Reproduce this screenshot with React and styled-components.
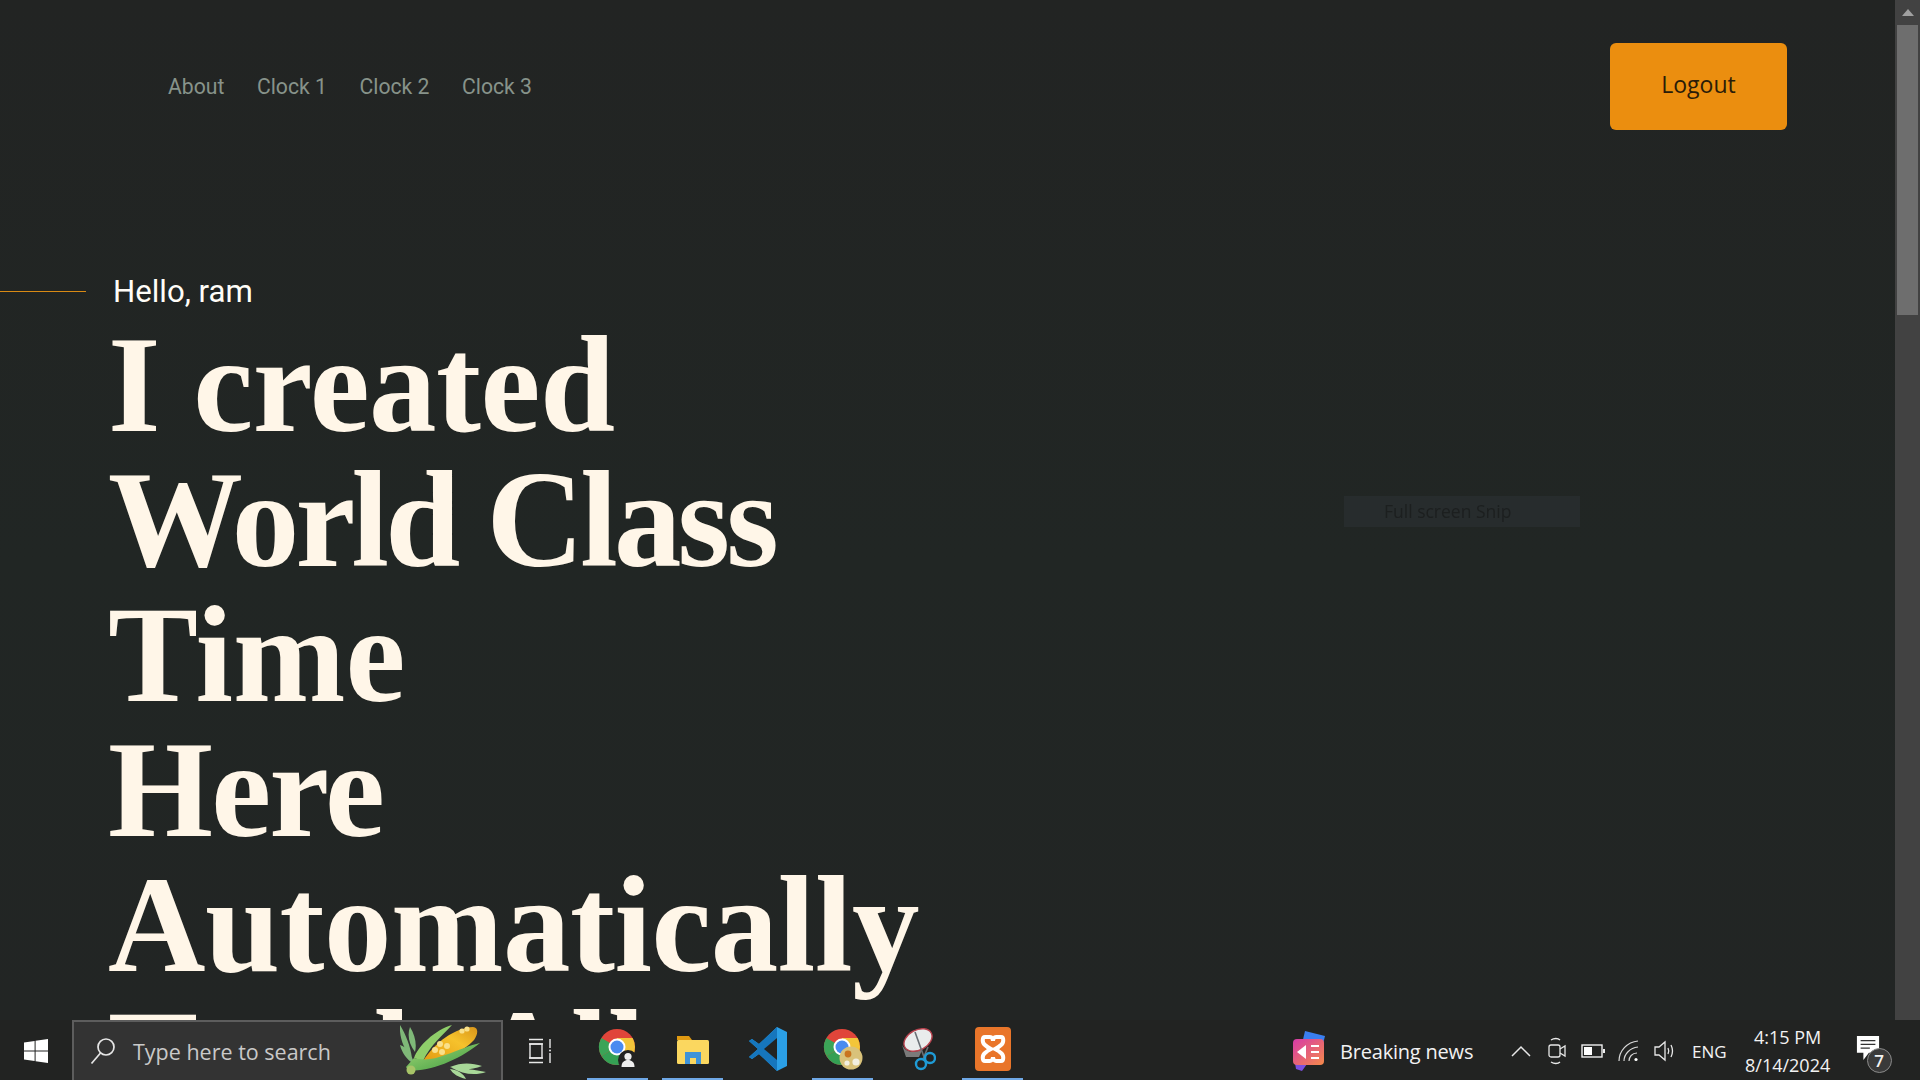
import React from 'react';
import styled, { createGlobalStyle } from 'styled-components';

const GlobalStyle = createGlobalStyle`
  html, body {
    margin: 0;
    height: 100%;
    overflow: hidden;
    background: #222423;
  }
  * { box-sizing: border-box; }
`;

const Screen = styled.div`
  width: 1920px;
  height: 1080px;
  display: flex;
  flex-direction: column;
  overflow: hidden;
`;
const Viewport = styled.div`
  flex: 0 0 1020px;
  display: flex;
  overflow: hidden;
`;
const Page = styled.main`
  position: relative;
  flex: 1;
  overflow: hidden;
  background: linear-gradient(180deg, #222423 0%, #212624 55%, #222524 100%);
`;
const Header = styled.header`
  height: 173px;
  padding: 43px 108px 0 168px;
  display: flex;
  align-items: flex-start;
  justify-content: space-between;
`;
const Nav = styled.nav`
  height: 87px;
  display: flex;
  align-items: center;
  gap: 32.5px;
`;
const NavLink = styled.a`
  font-family: Roboto, sans-serif;
  font-size: 21.2px;
  font-weight: 400;
  color: #87938a;
`;
const LogoutButton = styled.button`
  width: 177px;
  height: 87px;
  border: 0;
  border-radius: 6px;
  background: #eb8e0f;
  color: #2a1c08;
  font-family: "Open Sans", sans-serif;
  font-size: 23px;
  padding: 0 0 5px;
`;
const Hero = styled.section`
  padding-top: 100px;
`;
const Greeting = styled.div`
  display: flex;
  align-items: center;
  gap: 27px;
  height: 36px;
`;
const Rule = styled.span`
  width: 86px;
  height: 1px;
  background: #d98a14;
`;
const Hello = styled.span`
  font-family: Roboto, sans-serif;
  font-size: 31.2px;
  color: #fffdf8;
`;
const Title = styled.h1`
  margin: 9px 0 0 108px;
  font-family: "Liberation Serif", serif;
  font-size: 135px;
  font-weight: 700;
  line-height: 135px;
  color: #fff6e8;
`;
const TitleLine = styled.span`
  display: block;
  white-space: nowrap;
  letter-spacing: ${(p) => p.$spacing || '-0.5px'};
  transform: scaleY(${(p) => p.$stretch || 1.02});
  transform-origin: 0 76%;
`;
const SnipHint = styled.div`
  position: absolute;
  left: 1344px;
  top: 496px;
  width: 236px;
  height: 31px;
  background: #272c2d;
  color: #1c1f1f;
  font-family: "Open Sans", sans-serif;
  font-size: 17.5px;
  line-height: 31px;
  padding-left: 40px;
  filter: blur(0.6px);
`;
const Scrollbar = styled.div`
  flex: 0 0 25px;
  display: flex;
  flex-direction: column;
  align-items: center;
  background: #424242;
`;
const ScrollArrow = styled.div`
  height: 25px;
  display: flex;
  align-items: center;
  justify-content: center;
`;
const ScrollThumb = styled.div`
  width: 21px;
  height: 290px;
  background: #6e6e6e;
`;

const Taskbar = styled.footer`
  flex: 0 0 60px;
  display: flex;
  align-items: stretch;
  background: #222322;
  color: #f2f2f2;
`;
const StartButton = styled.div`
  width: 72px;
  display: flex;
  align-items: center;
  justify-content: center;
`;
const SearchBox = styled.div`
  width: 431px;
  padding: 0 14px 0 16px;
  display: flex;
  align-items: center;
  border: 2px solid #5d5d5d;
  background: #333333;
`;
const SearchText = styled.span`
  flex: 1;
  margin-left: 17px;
  font-family: "Open Sans", sans-serif;
  font-size: 21.5px;
  color: #c9c9c9;
`;
const TaskView = styled.div`
  width: 76px;
  display: flex;
  align-items: center;
  justify-content: center;
`;
const AppList = styled.div`
  display: flex;
  gap: 14px;
  margin-left: 8px;
`;
const AppCell = styled.div`
  width: 61px;
  display: flex;
  align-items: center;
  justify-content: center;
  border-bottom: 4px solid ${(p) => (p.$open ? '#6fa8e6' : 'transparent')};
`;
const Tray = styled.div`
  flex: 1;
  display: flex;
  align-items: center;
  padding-left: 268px;
`;
const News = styled.div`
  width: 212px;
  display: flex;
  align-items: center;
  gap: 15px;
  font-family: "Open Sans", sans-serif;
  font-size: 20px;
  letter-spacing: -0.2px;
`;
const TrayIcon = styled.div`
  width: 36px;
  display: flex;
  justify-content: center;
`;
const Lang = styled.span`
  margin-left: 9px;
  font-family: "Open Sans", sans-serif;
  font-size: 17px;
`;
const Clock = styled.div`
  width: 120px;
  margin-left: 1px;
  text-align: center;
  font-family: "Open Sans", sans-serif;
  font-size: 18px;
  line-height: 28px;
`;
const Notify = styled.div`
  position: relative;
  width: 38px;
  margin-left: 8px;
`;
const NotifyCount = styled.span`
  position: absolute;
  left: 11px;
  top: 13px;
  width: 25px;
  height: 25px;
  border: 1px solid #8a8a8a;
  border-radius: 50%;
  background: #3a3a3a;
  font-family: "Open Sans", sans-serif;
  font-size: 17px;
  font-weight: 600;
  line-height: 23px;
  text-align: center;
`;
const DesktopEdge = styled.div`
  width: 1px;
  margin: 0 7px 0 auto;
  background: #8f8f8f;
`;

const WindowsLogo = () => (
  <svg width="24" height="24" viewBox="0 0 24 24" fill="#fff">
    <path d="M0 3.4 10.6 2v9.4H0zM11.6 1.8 24 0v11.4H11.6zM0 12.5h10.6V22L0 20.6zM11.6 12.5H24V24l-12.4-1.8z" />
  </svg>
);

const SearchGlass = () => (
  <svg width="26" height="28" viewBox="0 0 26 28" fill="none" stroke="#e6e6e6" strokeWidth="1.7">
    <circle cx="16" cy="10" r="8" />
    <path d="M10.5 16 1.5 26.5" />
  </svg>
);

const Corn = () => (
  <svg width="87" height="58" viewBox="10 2 87 58">
    <defs>
      <linearGradient id="cob" x1="0" y1="1" x2="1" y2="0">
        <stop offset="0" stopColor="#e39a12" />
        <stop offset="0.6" stopColor="#f6c22c" />
        <stop offset="1" stopColor="#d9951a" />
      </linearGradient>
      <linearGradient id="husk" x1="0" y1="0" x2="1" y2="1">
        <stop offset="0" stopColor="#a5d878" />
        <stop offset="1" stopColor="#3a9a3e" />
      </linearGradient>
    </defs>
    <path d="M10 5C16 15 20 25 22 38 14 30 9 17 10 5zM20 7c5 8 7 17 5 25-6-8-8-17-5-25zM10 25c7 2 12 9 14 19-7-4-12-11-14-19z" fill="#7fb878" />
    <path d="M60 47c12-5 22-4 32-1-10 4-22 5-32 1zM62 48c10 0 23 2 34 4-11 4-24 2-34-4zM60 49c8 1 14 5 16 10-8-2-13-5-16-10z" fill="#a8d898" />
    <path d="M33 41C45 22 65 8 83 7c6 1 5 7 1 13C72 33 50 42 33 41z" fill="url(#cob)" />
    <circle cx="50" cy="24" r="3" fill="#f9e08a" />
    <circle cx="45" cy="30" r="3" fill="#f9e08a" />
    <circle cx="52" cy="32" r="3" fill="#f9e08a" />
    <circle cx="57" cy="26" r="3" fill="#f9e08a" />
    <circle cx="72" cy="11" r="2.6" fill="#f9e08a" />
    <circle cx="77" cy="9" r="2.6" fill="#f9e08a" />
    <path d="M24 38C28 26 45 10 62 5 54 14 40 25 33 41z" fill="#8fce6a" />
    <path d="M18 50c22 3 54-12 72-27-10 2-20 7-35 12-10 4-20 6-31 3l-8 9z" fill="url(#husk)" />
    <circle cx="21" cy="50" r="4.5" fill="#a7c468" />
  </svg>
);

const TaskViewIcon = () => (
  <svg width="26" height="26" viewBox="0 0 26 26" fill="none" stroke="#e8e8e8" strokeWidth="1.4">
    <path d="M1 1.5h14M1 6h14M1 20h14M1 24.5h14" />
    <rect x="2" y="6" width="12" height="14" />
    <path d="M22 1v9M22 15v10" />
    <circle cx="22" cy="12.5" r="1" fill="#e8e8e8" stroke="none" />
  </svg>
);

const Chrome = ({ children }) => (
  <svg width="40" height="44" viewBox="0 0 40 44">
    <circle cx="19" cy="20" r="18" fill="#e0453a" />
    <path d="M19 20 3.4 29A18 18 0 0 1 3.4 11z" fill="#3ba457" />
    <path d="M19 20 3.4 29A18 18 0 0 0 19 38a18 18 0 0 0 15.6-9z" fill="#34a054" />
    <path d="M19 20h18a18 18 0 0 0-2.4-9H19z" fill="#f3c53a" />
    <path d="M19 20h18a18 18 0 0 1-8 15z" fill="#f3c53a" />
    <circle cx="19" cy="20" r="8.5" fill="#fff" />
    <circle cx="19" cy="20" r="6.5" fill="#4a8bf0" />
    {children}
  </svg>
);

const Folder = () => (
  <svg width="34" height="32" viewBox="0 0 34 32">
    <path d="M1 3h12l3 4H1z" fill="#e09a12" />
    <rect x="1" y="7" width="32" height="24" rx="1.5" fill="#fbd75f" />
    <path d="M9 31V19h16v12h-5v-6h-6v6z" fill="#3f93d8" />
  </svg>
);

const VsCode = () => (
  <svg width="38" height="44" viewBox="0 0 38 44">
    <path d="M28 0 38 5v34l-10 5-18-17-7 5-3-2 9-8-9-8 3-2 7 5z" fill="#2b9fe6" />
    <path d="M28 0v44L10 27l-7 5-3-2 9-8-9-8 3-2 7 5z" fill="#1676bd" />
    <path d="M28 11 15 22l13 11z" fill="#222322" />
  </svg>
);

const Snip = () => (
  <svg width="36" height="44" viewBox="0 0 36 44" fill="none">
    <path d="M2 18c4 8 14 9 21 3l-4 9H6z" fill="#7a7a7a" />
    <ellipse cx="18" cy="13" rx="15" ry="10" transform="rotate(-28 18 13)" fill="#e9ecec" stroke="#b8424e" strokeWidth="1.4" />
    <path d="M15 5 24 30M28 20 23 32" stroke="#6a7076" strokeWidth="1.6" />
    <circle cx="21" cy="37" r="5" stroke="#1f9bd6" strokeWidth="2.4" />
    <circle cx="30" cy="31" r="5" stroke="#1f9bd6" strokeWidth="2.4" />
  </svg>
);

const Xampp = () => (
  <svg width="36" height="44" viewBox="0 0 36 44">
    <rect x="0" y="0" width="36" height="44" rx="4" fill="#e9752a" />
    <path d="M10 10h5c2 0 3 2 3 4 0-2 1-4 3-4h5c3 0 3 6 0 8-2 2-4 3-6 4 2 1 4 2 6 4 3 2 3 8 0 8h-5c-2 0-3-2-3-4 0 2-1 4-3 4h-5c-3 0-3-6 0-8 2-2 4-3 6-4-2-1-4-2-6-4-3-2-3-8 0-8z" fill="none" stroke="#fff" strokeWidth="4" />
  </svg>
);

const NewsIcon = () => (
  <svg width="34" height="44" viewBox="0 0 34 44">
    <defs>
      <linearGradient id="newsFace" x1="0" y1="0" x2="1" y2="1">
        <stop offset="0" stopColor="#d63aa8" />
        <stop offset="1" stopColor="#f58a4a" />
      </linearGradient>
    </defs>
    <path d="M14 2 34 7l-3 12H10z" fill="#3a7ef0" />
    <path d="M3 28h18l-10 14-6-2z" fill="#7a4fe0" />
    <rect x="2" y="10" width="31" height="26" rx="4" fill="url(#newsFace)" />
    <path d="M6 23 15 16v14z" fill="#fff" />
    <path d="M20 17h8M20 23h8M20 29h8" stroke="#fff" strokeWidth="2" />
  </svg>
);

const Chevron = () => (
  <svg width="20" height="12" viewBox="0 0 20 12" fill="none" stroke="#e8e8e8" strokeWidth="1.5">
    <path d="M1 11 10 2l9 9" />
  </svg>
);

const MeetIcon = () => (
  <svg width="18" height="28" viewBox="0 0 18 28" fill="none" stroke="#e8e8e8" strokeWidth="1.3">
    <path d="M3 3c3-2 7-2 9 0M3 25c3 2 7 2 9 0" />
    <rect x="1" y="8" width="11" height="12" rx="2" />
    <path d="M12 12 17 9v10l-5-3" />
  </svg>
);

const BatteryIcon = () => (
  <svg width="24" height="14" viewBox="0 0 24 14">
    <rect x="1" y="1" width="20" height="12" fill="none" stroke="#eee" strokeWidth="1.4" />
    <rect x="3" y="3" width="8" height="8" fill="#fff" />
    <rect x="22" y="5" width="2" height="4" fill="#eee" />
  </svg>
);

const WifiIcon = () => (
  <svg width="22" height="22" viewBox="0 0 22 22" fill="none" stroke="#d8d8d8" strokeWidth="1.2">
    <path d="M1 21C1 11 9 2 20 1M6 21c0-7 6-13 14-14M11 21c0-4 3-8 8-8" />
    <circle cx="18" cy="19.5" r="1.6" fill="#fff" stroke="none" />
  </svg>
);

const VolumeIcon = () => (
  <svg width="22" height="22" viewBox="0 0 22 22" fill="none" stroke="#e8e8e8" strokeWidth="1.3">
    <path d="M1 7h4l6-5v18l-6-5H1z" />
    <path d="M14 8c1 2 1 4 0 6M17 5c2 4 2 8 0 12" />
  </svg>
);

const NotifyBubble = () => (
  <svg width="24" height="28" viewBox="0 0 26 30">
    <path d="M1 1h24v18H14l-6 8v-8H1z" fill="#fff" />
    <path d="M5 6h16M5 10h16M5 14h10" stroke="#333" strokeWidth="1.3" />
  </svg>
);

const App = () => (
  <Screen>
    <GlobalStyle />
    <Viewport>
      <Page>
        <Header>
          <Nav>
            <NavLink>About</NavLink>
            <NavLink>Clock 1</NavLink>
            <NavLink>Clock 2</NavLink>
            <NavLink>Clock 3</NavLink>
          </Nav>
          <LogoutButton>Logout</LogoutButton>
        </Header>
        <Hero>
          <Greeting>
            <Rule />
            <Hello>Hello, ram</Hello>
          </Greeting>
          <Title>
            <TitleLine>I created</TitleLine>
            <TitleLine $spacing="-3.8px">World Class</TitleLine>
            <TitleLine $spacing="0px">Time</TitleLine>
            <TitleLine $spacing="-1.8px">Here</TitleLine>
            <TitleLine>Automatically</TitleLine>
            <TitleLine $stretch={1.04}>Track All</TitleLine>
          </Title>
        </Hero>
        <SnipHint>Full screen Snip</SnipHint>
      </Page>
      <Scrollbar>
        <ScrollArrow>
          <svg width="12" height="7" viewBox="0 0 12 7">
            <path d="M6 0 12 7H0z" fill="#a0a0a0" />
          </svg>
        </ScrollArrow>
        <ScrollThumb />
      </Scrollbar>
    </Viewport>
    <Taskbar>
      <StartButton>
        <WindowsLogo />
      </StartButton>
      <SearchBox>
        <SearchGlass />
        <SearchText>Type here to search</SearchText>
        <Corn />
      </SearchBox>
      <TaskView>
        <TaskViewIcon />
      </TaskView>
      <AppList>
        <AppCell $open>
          <Chrome>
            <circle cx="30" cy="33" r="10" fill="#222" />
            <circle cx="30" cy="29.5" r="3.6" fill="#eee" />
            <path d="M23.5 40c0-5 3-7 6.5-7s6.5 2 6.5 7z" fill="#eee" />
          </Chrome>
        </AppCell>
        <AppCell $open>
          <Folder />
        </AppCell>
        <AppCell>
          <VsCode />
        </AppCell>
        <AppCell $open>
          <Chrome>
            <circle cx="28" cy="31" r="11.5" fill="#d9c27a" />
            <circle cx="25" cy="27" r="3.4" fill="#c9741e" />
            <circle cx="33" cy="35" r="3.6" fill="#f2efe0" />
            <circle cx="24" cy="36" r="2.6" fill="#f2efe0" />
          </Chrome>
        </AppCell>
        <AppCell>
          <Snip />
        </AppCell>
        <AppCell $open>
          <Xampp />
        </AppCell>
      </AppList>
      <Tray>
        <News>
          <NewsIcon />
          Breaking news
        </News>
        <TrayIcon><Chevron /></TrayIcon>
        <TrayIcon><MeetIcon /></TrayIcon>
        <TrayIcon><BatteryIcon /></TrayIcon>
        <TrayIcon><WifiIcon /></TrayIcon>
        <TrayIcon><VolumeIcon /></TrayIcon>
        <Lang>ENG</Lang>
        <Clock>
          4:15 PM
          <br />
          8/14/2024
        </Clock>
        <Notify>
          <NotifyBubble />
          <NotifyCount>7</NotifyCount>
        </Notify>
        <DesktopEdge />
      </Tray>
    </Taskbar>
  </Screen>
);

export default App;
